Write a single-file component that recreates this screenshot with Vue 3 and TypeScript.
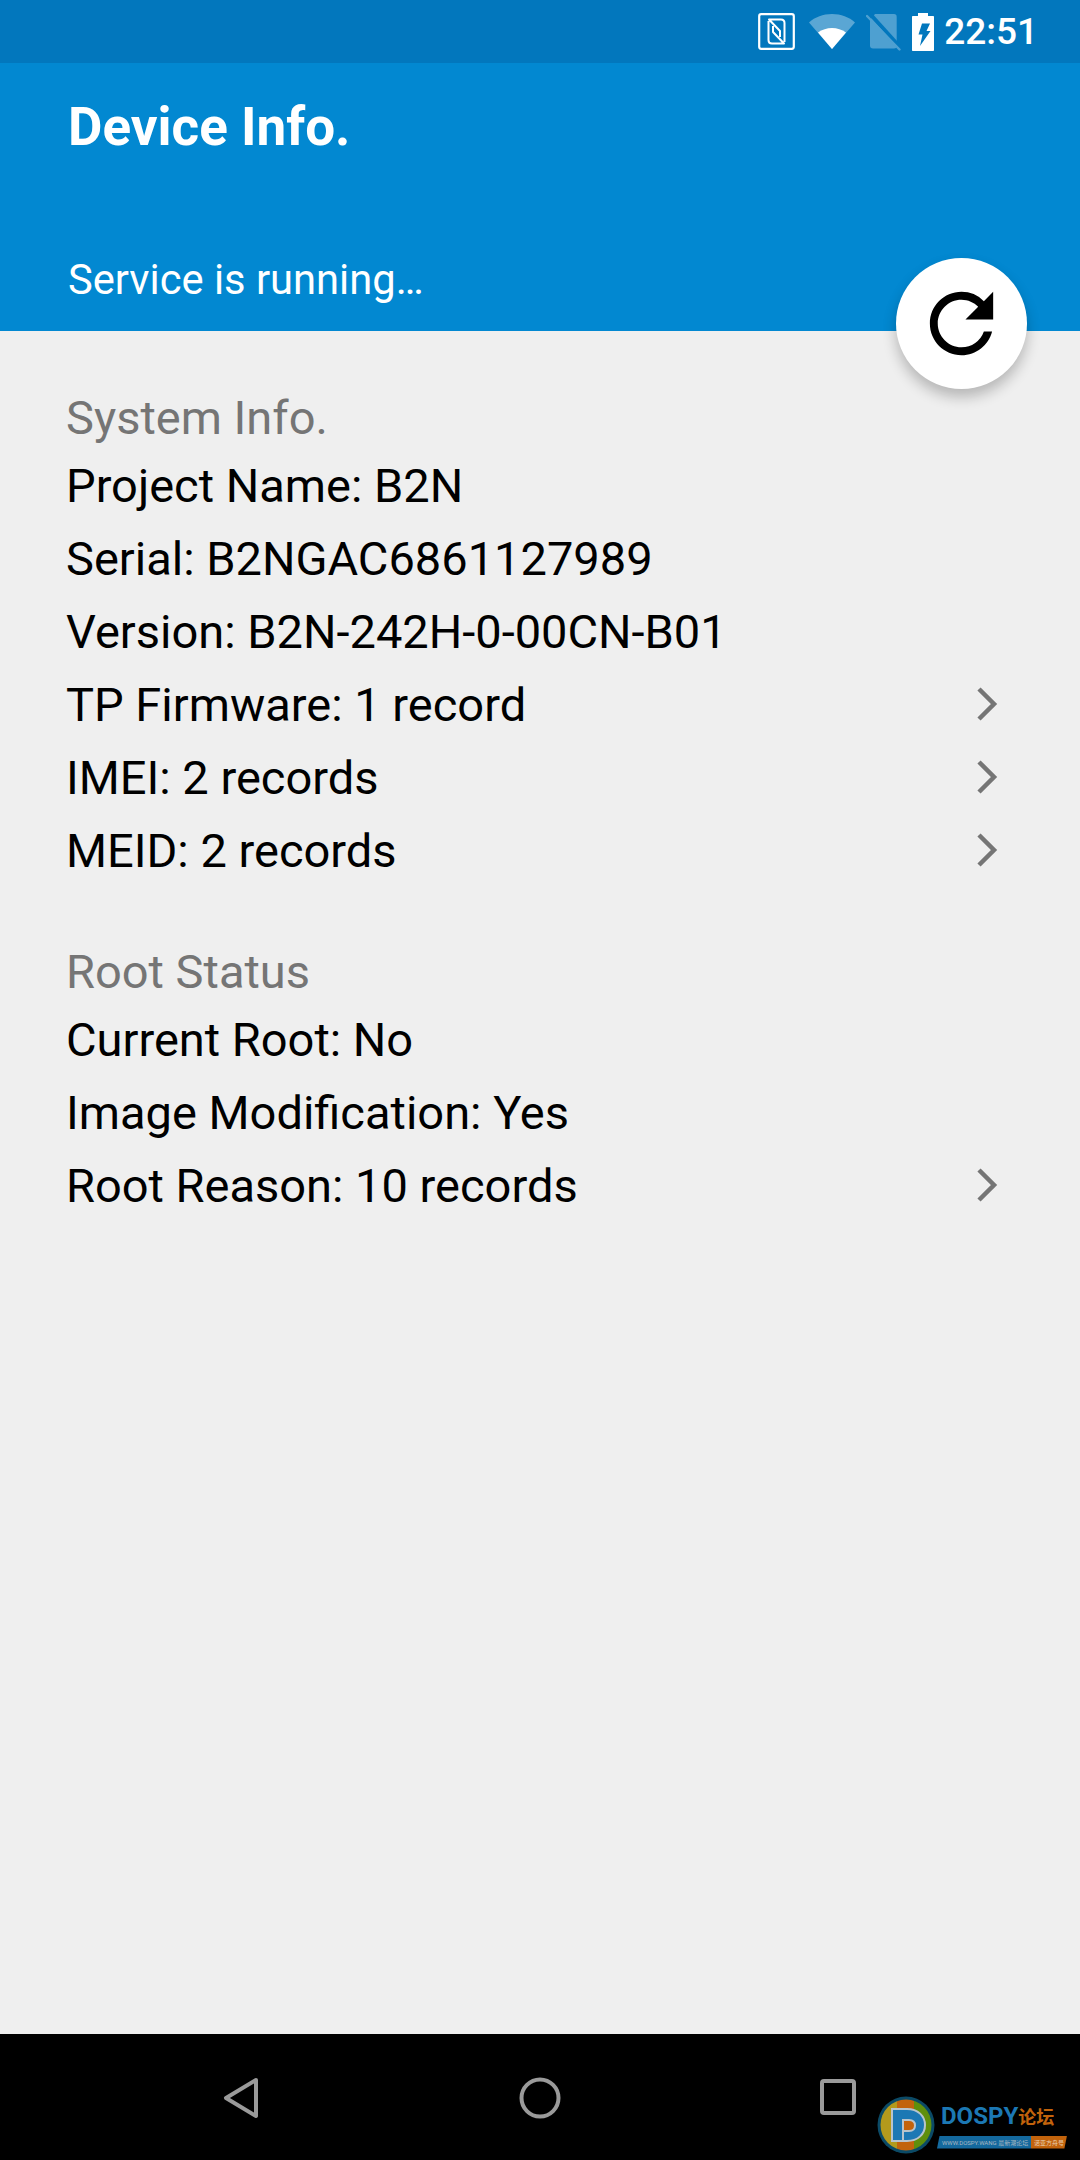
<script setup lang="ts">
interface Row { text: string; more?: boolean }
interface Section { title: string; rows: Row[] }
const sections: Section[] = [
  {
    title: 'System Info.',
    rows: [
      { text: 'Project Name: B2N' },
      { text: 'Serial: B2NGAC6861127989' },
      { text: 'Version: B2N-242H-0-00CN-B01' },
      { text: 'TP Firmware: 1 record', more: true },
      { text: 'IMEI: 2 records', more: true },
      { text: 'MEID: 2 records', more: true },
    ],
  },
  {
    title: 'Root Status',
    rows: [
      { text: 'Current Root: No' },
      { text: 'Image Modification: Yes' },
      { text: 'Root Reason: 10 records', more: true },
    ],
  },
]
</script>

<template>
  <div class="screen">
    <div class="status">
      <svg class="ic nfc" viewBox="0 0 37 37" width="37" height="37">
        <rect x="1.2" y="1.2" width="34.6" height="34.6" rx="2" fill="none" stroke="#fff" stroke-width="2.2" />
        <path d="M26.500 29V10q0-3.500-3.500-3.500H11L22 18v6M10.500 8v19q0 3.500 3.500 3.500h12L15 19v-6" fill="none" stroke="#fff" stroke-width="2" stroke-linejoin="round" />
      </svg>
      <svg class="ic wifi" viewBox="0 0 46 37" width="46" height="37">
        <path d="M0 9.500C6 4 14 1 23 1s17 3 23 8.500L23 36z" fill="#fff" fill-opacity=".35" />
        <path d="M9 19.500C13 16.500 18 15 23 15s10 1.500 14 4.500L23 36z" fill="#fff" />
      </svg>
      <svg class="ic sim" viewBox="0 0 35 38" width="35" height="38">
        <path d="M4 7 9 1h19q2.700 0 2.700 2.700V33q0 2.500-2.700 2.500H7q-3 0-3-3z" fill="#4ea0d1" />
        <path d="M5 2 33 33" stroke="#0277bd" stroke-width="4" />
        <path d="M1 3 33.500 36.500" stroke="#4ea0d1" stroke-width="2.400" stroke-linecap="round" />
      </svg>
      <svg class="ic batt" viewBox="0 0 22 38" width="22" height="38">
        <path d="M6 0h10v3h5c.6 0 1 .4 1 1v33c0 .6-.4 1-1 1H1c-.6 0-1-.4-1-1V4c0-.6.400-1 1-1h5z" fill="#fff" />
        <path d="M10 10.500h8L14.500 18h4L8 33l2.500-11.500h-4z" fill="#0277bd" />
      </svg>
      <span class="clock">22:51</span>
    </div>

    <header class="head">
      <div class="title">Device Info.</div>
      <div class="service">Service is running…</div>
      <button class="fab" type="button" aria-label="Refresh">
        <svg viewBox="0 0 24 24" width="95" height="95">
          <path d="M17.650 6.350A7.958 7.958 0 0 0 12 4c-4.420 0-7.990 3.580-7.990 8s3.570 8 7.990 8c3.730 0 6.840-2.550 7.730-6h-2.080A5.990 5.990 0 0 1 12 18c-3.310 0-6-2.690-6-6s2.690-6 6-6c1.660 0 3.140.690 4.220 1.780L13 11h7V4l-2.350 2.350z" fill="#000" />
        </svg>
      </button>
    </header>

    <main class="body">
      <section v-for="s in sections" :key="s.title" class="sec">
        <div class="sec-title">{{ s.title }}</div>
        <div v-for="r in s.rows" :key="r.text" class="row">
          <span>{{ r.text }}</span>
          <svg v-if="r.more" class="chev" viewBox="0 0 22 36" width="22" height="36">
            <path d="M3 3 18 18 3 33" fill="none" stroke="#757575" stroke-width="4.500" />
          </svg>
        </div>
      </section>
    </main>

    <nav class="nav">
      <svg class="back" viewBox="0 0 36 42" width="36" height="42">
        <path d="M33 3 3 21 33 39z" fill="none" stroke="#9a9a9a" stroke-width="4" stroke-linejoin="round" />
      </svg>
      <svg class="home" viewBox="0 0 42 42" width="42" height="42">
        <circle cx="21" cy="21" r="18.500" fill="none" stroke="#9a9a9a" stroke-width="4" />
      </svg>
      <svg class="recent" viewBox="0 0 36 36" width="36" height="36">
        <rect x="2" y="2" width="32" height="32" rx="2" fill="none" stroke="#9a9a9a" stroke-width="4" />
      </svg>
      <div class="mark">
        <svg class="mark-logo" viewBox="0 0 58 58" width="58" height="58">
          <defs><clipPath id="disc"><circle cx="29" cy="29" r="25.500" /></clipPath></defs>
          <circle cx="29" cy="29" r="28.500" fill="#0b4a66" />
          <g clip-path="url(#disc)">
            <rect x="0" width="20" height="58" fill="#b39a1c" />
            <rect x="20" width="17" height="58" fill="#c2630c" />
            <rect x="37" width="21" height="58" fill="#5f8f0c" />
          </g>
          <path d="M15 13h15c11 0 18 7 18 16s-7 16-18 16H15z" fill="#1c78b4" stroke="#b8c4cc" stroke-width="2" />
          <path d="M26 45V24h6c4 0 6 2 6 5.500S36 35 32 35h-6" fill="#c2630c" stroke="#b8c4cc" stroke-width="2" />
        </svg>
        <div class="mark-text">
          <div class="mark-name">DOSPY<span class="mark-cn">论坛</span></div>
          <div class="mark-band"><span class="mark-url">WWW.DOSPY.WANG 最新潮论坛</span><span class="mark-tag">诺亚方舟号</span></div>
        </div>
      </div>
    </nav>
  </div>
</template>

<style>
html, body { margin: 0; padding: 0; background: #efefef; }
</style>

<style scoped>
.screen {
  width: 1080px;
  height: 2160px;
  display: flex;
  flex-direction: column;
  background: #efefef;
  font-family: Roboto, "Noto Sans CJK SC", sans-serif;
  overflow: hidden;
}
.status {
  height: 63px;
  flex: none;
  background: #0277bd;
  display: flex;
  align-items: center;
  justify-content: flex-end;
  padding-right: 42px;
  box-sizing: border-box;
  color: #fff;
}
.ic { flex: none; display: block; }
.nfc { margin-right: 14px; }
.wifi { margin-right: 11px; }
.sim { margin-right: 11px; }
.batt { margin-right: 10px; }
.clock { font-size: 37px; font-weight: 500; line-height: 63px; }
.head {
  position: relative;
  height: 268px;
  flex: none;
  background: #0288d1;
  color: #fff;
  padding-left: 68px;
  box-sizing: border-box;
}
.title { font-size: 53px; font-weight: 700; line-height: 56px; padding-top: 36px; }
.service { font-size: 41.7px; line-height: 48px; margin-top: 101px; }
.fab {
  position: absolute;
  left: 896px;
  top: 195px;
  width: 131px;
  height: 131px;
  border: 0;
  padding: 0;
  border-radius: 50%;
  background: #fff;
  box-shadow: 0 8px 14px rgba(0, 0, 0, .24);
  display: flex;
  align-items: center;
  justify-content: center;
}
.body { flex: 1; padding: 58px 66px 0; min-height: 0; }
.sec { margin-bottom: 56px; }
.sec-title { font-size: 47px; line-height: 58px; margin-bottom: 2px; color: #757575; }
.row {
  height: 73px;
  display: flex;
  align-items: center;
  justify-content: space-between;
  font-size: 47px;
  color: #000;
}
.chev { margin-right: 16px; margin-bottom: 2px; }
.nav {
  position: relative;
  height: 126px;
  flex: none;
  background: #000;
}
.back { position: absolute; left: 223px; top: 43px; }
.home { position: absolute; left: 519px; top: 43px; }
.recent { position: absolute; left: 820px; top: 45px; }
.mark {
  position: absolute;
  left: 877px;
  top: 62px;
  width: 190px;
  display: flex;
  align-items: center;
  gap: 2px;
}
.mark-logo { flex: none; }
.mark-text { flex: 1; min-width: 0; }
.mark-name { font-size: 24px; font-weight: 700; color: #1c78b4; line-height: 28px; padding-left: 4px; white-space: nowrap; }
.mark-cn { color: #c2630c; font-size: 18px; }
.mark-band { display: flex; height: 13px; margin-top: 4px; overflow: hidden; white-space: nowrap; clip-path: polygon(2% 0, 100% 0, 98% 100%, 0 100%); }
.mark-url { background: #14699e; color: #aab8c2; font-size: 6px; line-height: 13px; padding: 0 5px; flex: 1; overflow: hidden; }
.mark-tag { background: #c2630c; color: #e8cdb0; font-size: 6px; line-height: 13px; padding: 0 3px; flex: none; }
</style>
